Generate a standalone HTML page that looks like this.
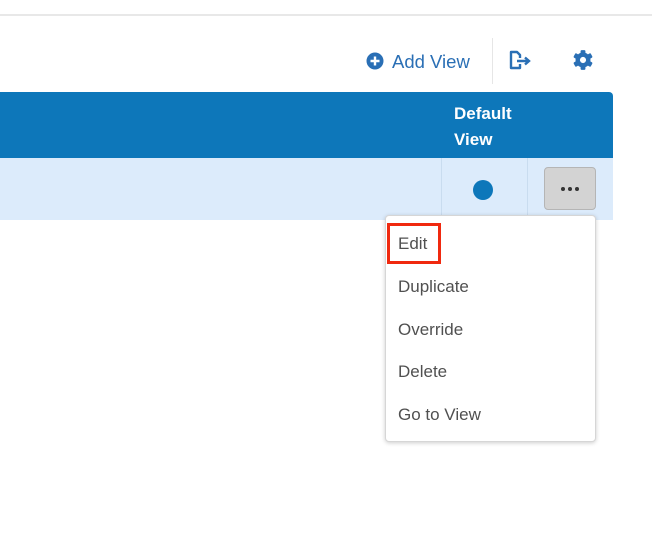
<!DOCTYPE html>
<html><head><meta charset="utf-8"><style>
body{margin:0;width:652px;height:546px;background:#fff;position:relative;overflow:hidden;font-family:"Liberation Sans",Arial,sans-serif}
.a{position:absolute}
.mi{position:absolute;left:398px;font-size:17px;color:#505050}
.d{display:inline-block;width:4px;height:4px;border-radius:50%;background:#333;margin:0 1.5px}
</style></head><body>
<div class="a" style="left:0;top:14px;width:652px;height:2px;background:#e8e8e8"></div>
<svg class="a" style="left:366px;top:52px" width="18" height="18" viewBox="0 0 18 18"><circle cx="9" cy="9" r="8.5" fill="#2a6fb5"/><path d="M9 4.5v9M4.5 9h9" stroke="#fff" stroke-width="2.4"/></svg>
<div class="a" style="left:392px;top:51px;font-size:18.5px;color:#2a6fb5">Add View</div>
<div class="a" style="left:492px;top:38px;width:1px;height:46px;background:#e6e6e6"></div>
<svg class="a" style="left:508px;top:49px" width="26" height="22" viewBox="0 0 26 22"><path d="M12 15v4H3V3h6l3 3v3" fill="none" stroke="#2a6fb5" stroke-width="2.4" stroke-linejoin="round"/><path d="M9 12h11M17 8.5l4 3.5-4 3.5" fill="none" stroke="#2a6fb5" stroke-width="2.4"/></svg>
<svg class="a" style="left:572px;top:49px" width="22" height="22" viewBox="0 0 20 20"><g fill="#2a6fb5"><circle cx="10" cy="10" r="6.8"/><rect x="7.8" y="1" width="4.4" height="18" rx="1"/><rect x="7.8" y="1" width="4.4" height="18" rx="1" transform="rotate(60 10 10)"/><rect x="7.8" y="1" width="4.4" height="18" rx="1" transform="rotate(120 10 10)"/></g><circle cx="10" cy="10" r="2.8" fill="#fff"/></svg>
<div class="a" style="left:0;top:92px;width:613px;height:66px;background:#0d77ba;border-top-right-radius:4px"></div>
<div class="a" style="left:454px;top:101px;font-size:17px;font-weight:bold;color:#fff;line-height:26px">Default<br>View</div>
<div class="a" style="left:0;top:158px;width:613px;height:62px;background:#dcebfb"></div>
<div class="a" style="left:441px;top:158px;width:1px;height:62px;background:#c9dcef"></div>
<div class="a" style="left:527px;top:158px;width:1px;height:62px;background:#c9dcef"></div>
<div class="a" style="left:473px;top:180px;width:20px;height:20px;border-radius:50%;background:#0d77ba"></div>
<div class="a" style="left:544px;top:167px;width:52px;height:43px;box-sizing:border-box;background:#d3d3d3;border:1px solid #b5b5b5;border-radius:4px;text-align:center;line-height:0;padding-top:19px"><span class="d"></span><span class="d"></span><span class="d"></span></div>
<div class="a" style="left:385px;top:215px;width:211px;height:227px;box-sizing:border-box;background:#fff;border:1px solid #d6d6d6;border-radius:4px;box-shadow:0 1px 4px rgba(0,0,0,.2)"></div>
<div class="a" style="left:387px;top:223px;width:54px;height:41px;box-sizing:border-box;border:3px solid #f0290f"></div>
<div class="mi" style="top:234px">Edit</div>
<div class="mi" style="top:277px">Duplicate</div>
<div class="mi" style="top:320px">Override</div>
<div class="mi" style="top:362px">Delete</div>
<div class="mi" style="top:405px">Go to View</div>
</body></html>
